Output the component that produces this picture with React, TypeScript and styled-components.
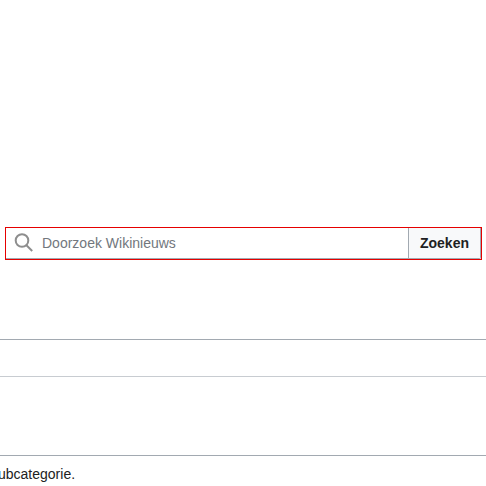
import React from "react";
import styled, { createGlobalStyle } from "styled-components";

const GlobalStyle = createGlobalStyle`
  body {
    margin: 0;
    background: #ffffff;
    color: #202122;
    font-family: "Liberation Sans", Arial, sans-serif;
    font-size: 14px;
    line-height: 22px;
    overflow-x: hidden;
  }
`;

const Page = styled.div`
  padding-top: 227px;
`;

const SearchForm = styled.form`
  display: flex;
  height: 33px;
  margin: 0 4px 79px 5px;
  box-sizing: border-box;
  border: 1px solid #e60000;
`;

const SearchField = styled.label`
  display: flex;
  flex: 1;
  align-items: center;
  gap: 8px;
  min-width: 0;
  padding-left: 8px;
  border-bottom: 1px solid #a2a9b1;
`;

const SearchIcon = styled.svg`
  flex: none;
  width: 20px;
  height: 20px;
  fill: none;
  stroke: #8e8e8e;
  stroke-width: 2;
`;

const SearchInput = styled.input`
  flex: 1;
  min-width: 0;
  padding: 0;
  border: 0;
  outline: 0;
  background: transparent;
  color: #202122;
  font: inherit;

  &::placeholder {
    color: #72777d;
    opacity: 1;
  }
`;

const SearchButton = styled.button`
  box-sizing: border-box;
  width: 73px;
  padding: 0;
  border: 1px solid #a2a9b1;
  border-top: 0;
  border-radius: 0 0 2px 0;
  background: #f8f9fa;
  color: #202122;
  font: inherit;
  font-weight: bold;
  cursor: pointer;
`;

const Toolbar = styled.div`
  height: 36px;
  border-top: 1px solid #a2a9b1;
  border-bottom: 1px solid #c8ccd1;
`;

const Section = styled.section`
  padding-top: 78px;
`;

const Summary = styled.p`
  margin: 0;
  padding-top: 7px;
  border-top: 1px solid #a2a9b1;
  text-indent: -2px;
`;

export default function App() {
  return (
    <>
      <GlobalStyle />
      <Page>
        <SearchForm role="search" onSubmit={(event) => event.preventDefault()}>
          <SearchField>
            <SearchIcon viewBox="0 0 20 20" aria-hidden="true">
              <circle cx="8" cy="7.5" r="6.3" />
              <path d="m12.2 12 6 6" />
            </SearchIcon>
            <SearchInput
              type="search"
              aria-label="Doorzoek Wikinieuws"
              placeholder="Doorzoek Wikinieuws"
            />
          </SearchField>
          <SearchButton type="submit">Zoeken</SearchButton>
        </SearchForm>
        <Toolbar />
        <Section>
          <Summary>ubcategorie.</Summary>
        </Section>
      </Page>
    </>
  );
}
